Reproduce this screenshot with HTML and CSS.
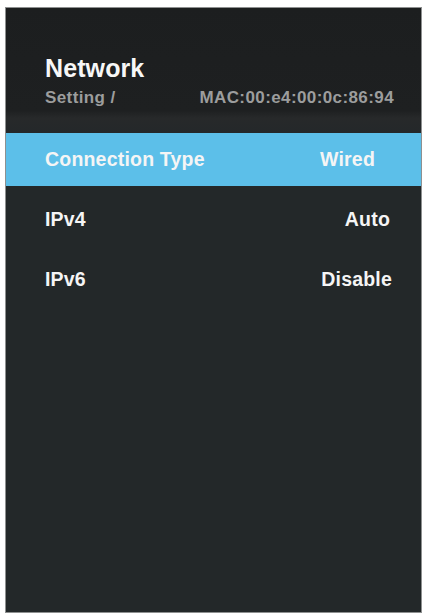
FILE: index.html
```html
<!DOCTYPE html>
<html lang="en">
<head>
<meta charset="utf-8">
<title>Network</title>
<link rel="stylesheet" href="styles.css">
</head>
<body>
<div class="panel">
  <header class="header">
    <div class="title">Network</div>
    <div class="sub">
      <span class="crumb">Setting /</span>
      <span class="mac">MAC:00:e4:00:0c:86:94</span>
    </div>
  </header>
  <ul class="menu">
    <li class="row active"><span class="label">Connection Type</span><span class="value value-inset">Wired</span></li>
    <li class="row"><span class="label">IPv4</span><span class="value value-mid">Auto</span></li>
    <li class="row"><span class="label">IPv6</span><span class="value">Disable</span></li>
  </ul>
</div>
</body>
</html>
```
FILE: styles.css
```css
html, body {
  margin: 0;
  padding: 0;
  background: #ffffff;
}
body {
  font-family: "Liberation Sans", Arial, sans-serif;
  font-weight: bold;
}
.panel {
  box-sizing: border-box;
  width: 417px;
  height: 606px;
  margin: 7px 0 0 5px;
  border: 1px solid #8e9090;
  background: #232829;
  display: flex;
  flex-direction: column;
}
.header {
  height: 125px;
  box-sizing: border-box;
  padding: 46px 27px 0 39px;
  background: linear-gradient(#1c1e1f 0%, #1e2021 82%, #27292a 88%, #24282a 100%);
}
.title {
  font-size: 25px;
  line-height: 29px;
  color: #f7f7f7;
  letter-spacing: 0.1px;
}
.sub {
  display: flex;
  justify-content: space-between;
  margin-top: 5px;
  font-size: 17px;
  line-height: 20px;
  color: #9c9d9d;
  letter-spacing: 0.4px;
}
.menu {
  list-style: none;
  margin: 0;
  padding: 0;
  display: flex;
  flex-direction: column;
  gap: 7px;
}
.row {
  height: 53px;
  display: flex;
  align-items: center;
  justify-content: space-between;
  padding: 0 29px 0 39px;
  font-size: 19.5px;
  color: #f5f5f5;
  letter-spacing: 0.2px;
}
.row.active {
  background: #5cbfe9;
}
.value-inset {
  margin-right: 17px;
}
.value-mid {
  margin-right: 2px;
}
```
